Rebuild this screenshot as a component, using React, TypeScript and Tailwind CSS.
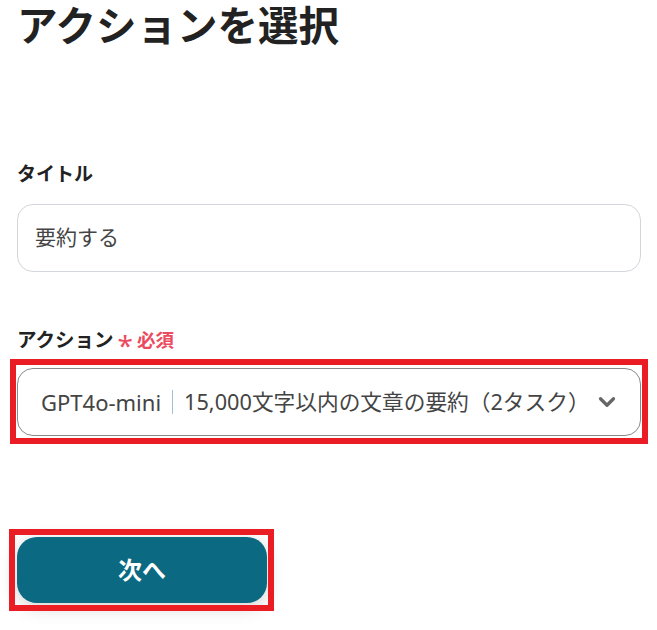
import { ChevronDown } from 'lucide-react';

/* Highlight frame drawn over an element (annotation) */
function RedFrame({ className }: { className: string }) {
  return <div className={`pointer-events-none absolute border-[6px] border-[#ea1c24] ${className}`} />;
}

export default function App() {
  return (
    <div
      className="min-h-[630px] w-[657px] bg-white px-[17px] text-[#222]"
      style={{ fontFamily: '"Noto Sans", "Noto Sans CJK JP", sans-serif' }}
    >
      <h1 className="text-[40.5px] leading-[52px] font-bold text-[#222]">アクションを選択</h1>

      {/* Title field */}
      <div className="mt-[108px] text-[19px] leading-[28px] font-bold text-[#222]">タイトル</div>
      <div className="mt-[16px] flex h-[68px] w-[624px] items-center rounded-[16px] border border-[#d3d6db] pl-[17px] text-[21px] text-[#444]">
        要約する
      </div>

      {/* Action select */}
      <div className="mt-[54px] flex items-center text-[19.5px] leading-[28px] font-bold">
        <span className="text-[#222]">アクション</span>
        <span className="ml-[4px] translate-y-[5px] text-[28px] leading-none font-normal text-[#ec4a5e]">*</span>
        <span className="ml-[4px] text-[18.5px] font-semibold text-[#ec4a5e]">必須</span>
      </div>
      <div className="relative mt-[14px] w-[624px]">
        <div className="flex h-[68px] items-center rounded-[16px] border border-[#8a8a8a] pr-[20px] pl-[23px] text-[#444]">
          <span className="shrink-0 text-[22px] whitespace-nowrap">GPT4o-mini</span>
          <span className="mx-[11px] h-[24px] shrink-0 border-l border-[#9fc0d8]" />
          <span className="min-w-0 flex-1 text-[21.7px] whitespace-nowrap">15,000文字以内の文章の要約（2タスク）</span>
          <ChevronDown className="h-[26px] w-[26px] shrink-0 text-[#666]" strokeWidth={3} />
        </div>
        <RedFrame className="-top-[9px] -right-[7px] -bottom-[8px] -left-[7px]" />
      </div>

      {/* Next button */}
      <div className="relative mt-[101px] w-[250px]">
        <button className="flex h-[66px] w-[250px] items-center justify-center rounded-[20px] bg-[#0b6a82] text-[24px] font-bold text-white shadow-[0_4px_18px_rgba(0,0,0,0.18)]">
          次へ
        </button>
        <RedFrame className="-top-[8px] -right-[7px] -bottom-[8px] -left-[8px]" />
      </div>
    </div>
  );
}
